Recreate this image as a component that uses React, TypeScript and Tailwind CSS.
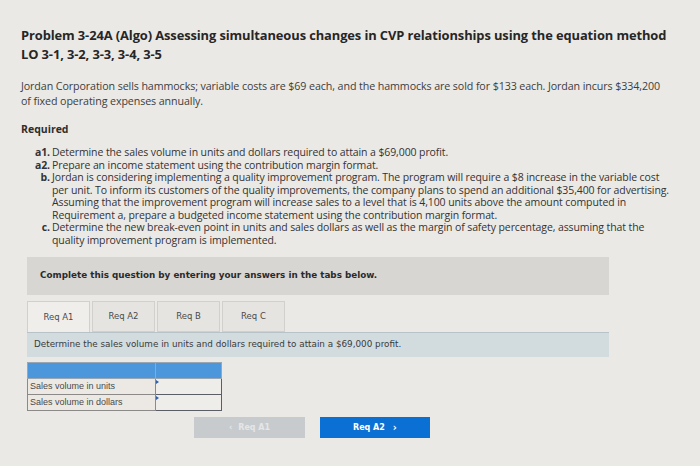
import { FC } from 'react'

const sans = { fontFamily: '"Open Sans", Lato, sans-serif' }
const verdana = { fontFamily: '"DejaVu Sans", Verdana, sans-serif' }

// lines are broken where the original page breaks them
const requirements: Array<{ label: string; lines: string[] }> = [
  { label: 'a1.', lines: ['Determine the sales volume in units and dollars required to attain a $69,000 profit.'] },
  { label: 'a2.', lines: ['Prepare an income statement using the contribution margin format.'] },
  {
    label: 'b.',
    lines: [
      'Jordan is considering implementing a quality improvement program. The program will require a $8 increase in the variable cost',
      'per unit. To inform its customers of the quality improvements, the company plans to spend an additional $35,400 for advertising.',
      'Assuming that the improvement program will increase sales to a level that is 4,100 units above the amount computed in',
      'Requirement a, prepare a budgeted income statement using the contribution margin format.',
    ],
  },
  {
    label: 'c.',
    lines: [
      'Determine the new break-even point in units and sales dollars as well as the margin of safety percentage, assuming that the',
      'quality improvement program is implemented.',
    ],
  },
]

const tabs = ['Req A1', 'Req A2', 'Req B', 'Req C']
const rows = ['Sales volume in units', 'Sales volume in dollars']

const Tabs: FC = () => (
  <div className="mt-[6px] flex gap-[2px]" style={verdana}>
    {tabs.map((tab, i) => (
      <div
        key={tab}
        className={
          i === 0
            ? 'flex h-[31px] w-[63px] items-center justify-center border border-b-0 border-[#d2d0cc] bg-[#efeeeb] text-[8.5px] text-[#4a4a4a]'
            : 'flex h-[31px] w-[63px] items-center justify-center border border-[#d2d0cc] bg-[#e6e4e0] text-[8.5px] text-[#4a4a4a]'
        }
      >
        {tab}
      </div>
    ))}
  </div>
)

const AnswerTable: FC = () => (
  <table className="mt-[5px] w-[195px] border-collapse text-[9px] text-[#4a4a4a]" style={{ fontFamily: '"Liberation Sans", Arial, sans-serif' }}>
    <thead>
      <tr className="h-[16px] bg-[#4c97dc]">
        <th className="w-[128px] border border-[#9aa7b3]"></th>
        <th className="border border-[#9aa7b3]"></th>
      </tr>
    </thead>
    <tbody>
      {rows.map((row) => (
        <tr key={row} className="h-[16px]">
          <td className="border border-[#8c8a88] bg-[#ece9e4] pl-[2px]">{row}</td>
          <td className="relative border border-[#5b5e66] bg-[#efede9]">
            <span className="absolute left-0 top-[1px] h-0 w-0 border-y-[2px] border-l-[3px] border-y-transparent border-l-[#2f5fa8]" />
          </td>
        </tr>
      ))}
    </tbody>
  </table>
)

export default function App() {
  return (
    <div className="h-[466px] w-[700px] overflow-hidden bg-[#ebe9e5] pl-[21px] pt-[26px] text-[#333]">
      <h1 className="text-[12.9px] font-bold leading-[19px] tracking-[-0.1px] text-[#262626]" style={sans}>
        Problem 3-24A (Algo) Assessing simultaneous changes in CVP relationships using the equation method
        <br />
        LO 3-1, 3-2, 3-3, 3-4, 3-5
      </h1>

      <p className="mt-[15px] whitespace-nowrap text-[10.7px] leading-[15px] tracking-[-0.1px] text-[#3d3d3d]" style={sans}>
        Jordan Corporation sells hammocks; variable costs are $69 each, and the hammocks are sold for $133 each. Jordan incurs $334,200
        <br />
        of fixed operating expenses annually.
      </p>

      <p className="mt-[13px] text-[10.5px] font-bold leading-[14px] text-[#2e2e2e]" style={sans}>
        Required
      </p>

      <ol className="mt-[10px] text-[10.5px] leading-[12.5px] tracking-[-0.1px] text-[#333]" style={sans}>
        {requirements.map((req) => (
          <li key={req.label} className="grid grid-cols-[29px_1fr] gap-x-[2px]">
            <span className="text-right font-bold">{req.label}</span>
            <span className="whitespace-nowrap">
              {req.lines.map((line) => (
                <span key={line} className="block">
                  {line}
                </span>
              ))}
            </span>
          </li>
        ))}
      </ol>

      <div className="ml-[6px] mt-[11px] w-[582px]">
        <div className="flex h-[38px] items-center bg-[#d8d6d2] pl-[13px] text-[8.8px] font-bold text-[#2b2b2b]" style={verdana}>
          Complete this question by entering your answers in the tabs below.
        </div>

        <Tabs />

        <div className="flex h-[25px] items-center border-t border-[#b9c3c7] bg-[#d2dcdf] pl-[7px] text-[8.8px] text-[#3a3a3a]" style={verdana}>
          Determine the sales volume in units and dollars required to attain a $69,000 profit.
        </div>

        <AnswerTable />

        <div className="ml-[167px] mt-[6px] flex gap-[15px] text-[8px] font-bold" style={verdana}>
          <button className="flex h-[21px] w-[111px] items-center justify-center gap-[6px] bg-[#c8cbcd] text-[#e4e6e8]">
            <span>&lsaquo;</span>
            <span>Req A1</span>
          </button>
          <button className="flex h-[21px] w-[110px] items-center justify-center gap-[8px] bg-[#0b70d3] text-white">
            <span>Req A2</span>
            <span className="text-[10px]">&rsaquo;</span>
          </button>
        </div>
      </div>
    </div>
  )
}
